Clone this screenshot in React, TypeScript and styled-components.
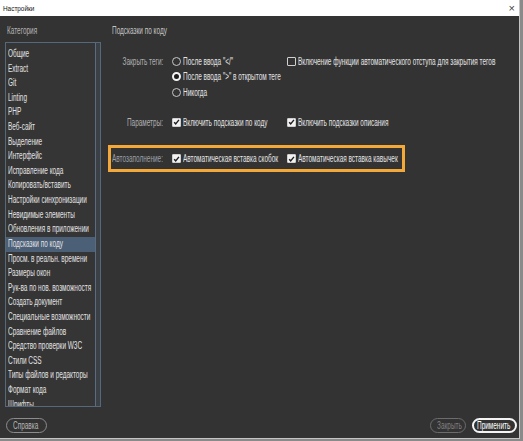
import React from "react"
import styled, {createGlobalStyle, css} from "styled-components"

const categories = [
  "Общие",
  "Extract",
  "Git",
  "Linting",
  "PHP",
  "Веб-сайт",
  "Выделение",
  "Интерфейс",
  "Исправление кода",
  "Копировать/вставить",
  "Настройки синхронизации",
  "Невидимые элементы",
  "Обновления в приложении",
  "Подсказки по коду",
  "Просм. в реальн. времени",
  "Размеры окон",
  "Рук-ва по нов. возможностя",
  "Создать документ",
  "Специальные возможности",
  "Сравнение файлов",
  "Средство проверки W3C",
  "Стили CSS",
  "Типы файлов и редакторы",
  "Формат кода",
  "Шрифты",
]

const GlobalStyle = createGlobalStyle`
  html, body {
    margin: 0;
    padding: 0;
    background: #8a8a8a;
  }
  body {
    font-family: "Liberation Sans", Arial, sans-serif;
    font-size: 10px;
  }
`

function Check({checked}: {checked?: boolean}) {
  return (
    <CheckBox $checked={checked}>
      {checked && (
        <svg width="8" height="8" viewBox="0 0 8 8">
          <path d="M1.3 4.2 L3.1 6.1 L6.8 1.6" fill="none" stroke="#1e1e1e" strokeWidth="1.6" />
        </svg>
      )}
    </CheckBox>
  )
}

export default function App() {
  return (
    <>
      <GlobalStyle />
      <Window>
        <TitleBar>
          <TitleText>Настройки</TitleText>
          <Close>×</Close>
        </TitleBar>
        <Body>
          <Sidebar>
            <Caption>
              <Txt>Категория</Txt>
            </Caption>
            <ListBox>
              <List>
                {categories.map((c) => (
                  <Item key={c} $active={c === "Подсказки по коду"}>
                    <Txt>{c}</Txt>
                  </Item>
                ))}
              </List>
              <ScrollBar />
            </ListBox>
          </Sidebar>
          <Pane>
            <Heading>
              <Txt>Подсказки по коду</Txt>
            </Heading>
            <Row>
              <FieldLabel>
                <Txt $right>Закрыть теги:</Txt>
              </FieldLabel>
              <Options>
                <Option>
                  <Radio />
                  <Txt>После ввода "&lt;/"</Txt>
                </Option>
                <Option>
                  <Radio $selected />
                  <Txt>После ввода "&gt;" в открытом теге</Txt>
                </Option>
                <Option>
                  <Radio />
                  <Txt>Никогда</Txt>
                </Option>
              </Options>
              <Options>
                <Option>
                  <Check />
                  <Txt>Включение функции автоматического отступа для закрытия тегов</Txt>
                </Option>
              </Options>
            </Row>
            <Row $gap={14.5}>
              <FieldLabel>
                <Txt $right>Параметры:</Txt>
              </FieldLabel>
              <Option>
                <Check checked />
                <Txt>Включить подсказки по коду</Txt>
              </Option>
              <Option>
                <Check checked />
                <Txt>Включить подсказки описания</Txt>
              </Option>
            </Row>
            <Highlight>
              <Row $inset>
                <FieldLabel $dim>
                  <Txt $right>Автозаполнение:</Txt>
                </FieldLabel>
                <Option>
                  <Check checked />
                  <Txt>Автоматическая вставка скобок</Txt>
                </Option>
                <Option>
                  <Check checked />
                  <Txt>Автоматическая вставка кавычек</Txt>
                </Option>
              </Row>
            </Highlight>
          </Pane>
        </Body>
        <Footer>
          <Button $w={41}>
            <Txt>Справка</Txt>
          </Button>
          <Actions>
            <Button $w={36} $disabled>
              <Txt>Закрыть</Txt>
            </Button>
            <Button $w={45} $primary>
              <Txt>Применить</Txt>
            </Button>
          </Actions>
        </Footer>
      </Window>
    </>
  )
}

const Window = styled.div`
  width: 519px;
  height: 438px;
  background: #333333;
  border-right: 1px solid #c4c4c4;
  border-bottom: 1px solid #c4c4c4;
  display: flex;
  flex-direction: column;
  overflow: hidden;
`

const TitleBar = styled.div`
  height: 16px;
  flex: none;
  background: #ffffff;
  display: flex;
  align-items: center;
  justify-content: space-between;
  padding: 0 4px 0 3px;
  color: #111;
`

const TitleText = styled.span`
  display: inline-block;
  font-size: 8px;
  transform: scaleX(0.8);
  transform-origin: left center;
`

const Close = styled.span`
  font-size: 11px;
  color: #444;
`

const Txt = styled.span<{$right?: boolean}>`
  display: inline-block;
  white-space: nowrap;
  transform: scaleX(0.645);
  transform-origin: ${(p) => (p.$right ? "right" : "left")} center;
`

const Body = styled.div`
  flex: 1;
  display: grid;
  grid-template-columns: 101px 1fr;
  min-height: 0;
`

const Sidebar = styled.div`
  display: flex;
  flex-direction: column;
  padding-left: 5px;
`

const Caption = styled.div`
  height: 26px;
  line-height: 29px;
  padding-left: 2px;
  color: #b4b4b4;
`

const ListBox = styled.div`
  height: 363px;
  border: 1px solid #56687c;
  background: #353535;
  display: flex;
  overflow: hidden;
`

const List = styled.div`
  flex: 1;
  min-width: 0;
  overflow: hidden;
  padding-top: 4px;
`

const Item = styled.div<{$active?: boolean}>`
  height: 14.62px;
  line-height: 14.62px;
  padding-left: 2px;
  color: #e2e2e2;
  white-space: nowrap;
  overflow: hidden;
  background: ${(p) => (p.$active ? "#4b5f77" : "transparent")};
`

const ScrollBar = styled.div`
  width: 4px;
  flex: none;
  background: #3b4047;
  border-left: 1px solid #5b6c80;
`

const Pane = styled.div`
  padding: 7px 0 0 7px;
  color: #e2e2e2;
`

const Heading = styled.div`
  height: 14px;
  line-height: 15px;
  padding-left: 4px;
  margin-bottom: 16.25px;
  color: #c4c4c4;
`

const Row = styled.div<{$gap?: number; $inset?: boolean}>`
  display: grid;
  grid-template-columns: ${(p) => (p.$inset ? "61px" : "64px")} 115px auto;
  align-items: start;
  margin-top: ${(p) => p.$gap ?? 0}px;
`

const FieldLabel = styled.div<{$dim?: boolean}>`
  height: 15.5px;
  display: flex;
  align-items: center;
  justify-content: flex-end;
  min-width: 0;
  padding-right: 9px;
  color: ${(p) => (p.$dim ? "#9aa0a6" : "#b0b0b0")};
`

const Options = styled.div`
  display: flex;
  flex-direction: column;
`

const Option = styled.div`
  height: 15.5px;
  display: flex;
  align-items: center;
  gap: 2px;
  white-space: nowrap;
  color: #e4e4e4;
`

const Radio = styled.span<{$selected?: boolean}>`
  width: 9px;
  height: 9px;
  box-sizing: border-box;
  flex: none;
  border-radius: 50%;
  border: ${(p) => (p.$selected ? "2.5px solid #f4f4f4" : "1px solid #c8c8c8")};
  background: ${(p) => (p.$selected ? "#1c1c1c" : "transparent")};
`

const CheckBox = styled.span<{$checked?: boolean}>`
  width: 9px;
  height: 9px;
  box-sizing: border-box;
  flex: none;
  display: inline-flex;
  align-items: center;
  justify-content: center;
  border-radius: 1px;
  border: 1px solid #cfcfcf;
  background: ${(p) => (p.$checked ? "#f2f2f2" : "transparent")};
`

const Highlight = styled.div`
  width: 291px;
  margin-top: 15px;
  border: 3px solid #f2a93a;
  padding: 3px 0;
`

const Footer = styled.div`
  height: 30px;
  flex: none;
  display: flex;
  align-items: flex-end;
  justify-content: space-between;
  padding: 0 2px 5px 6px;
  box-sizing: border-box;
`

const Actions = styled.div`
  display: flex;
  gap: 6px;
`

const Button = styled.div<{$w: number; $primary?: boolean; $disabled?: boolean}>`
  width: ${(p) => p.$w}px;
  height: 15px;
  box-sizing: border-box;
  padding-left: 6px;
  border-radius: 8px;
  display: flex;
  align-items: center;
  overflow: visible;
  white-space: nowrap;
  border: 1px solid #8c8c8c;
  color: #b8b8b8;
  ${(p) =>
    p.$disabled &&
    css`
      border-color: #6c6c6c;
      color: #808080;
    `}
  ${(p) =>
    p.$primary &&
    css`
      padding-left: 3px;
      border: 2px solid #f4f4f4;
      color: #ffffff;
    `}
`
